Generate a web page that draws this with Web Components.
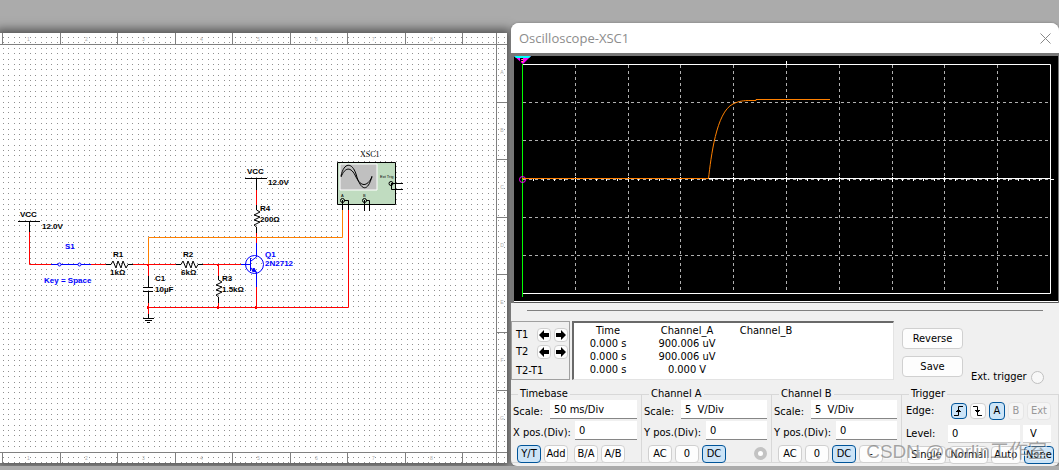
<!DOCTYPE html>
<html lang="en">
<head>
<meta charset="utf-8">
<title>Oscilloscope-XSC1</title>
<style>
    body{
    margin:0;
    background-color:#ababab;
    color:#000;
    font-family:"DejaVu Sans Condensed","DejaVu Sans",sans-serif;
    font-size:11px;
    line-height:14px;
    overflow:hidden;
    }
    main{
    display:grid;
    grid-template-columns:minmax(0,511fr) minmax(0,548fr);
    align-items:start;
    padding-top:23px;
    }
    circuit-sheet{
    margin:10px 4px 0 0;
    }
</style>
</head>
<body>
<main>
    <circuit-sheet></circuit-sheet>
    <scope-window heading="Oscilloscope-XSC1">
        <scope-screen></scope-screen>
        <cursor-panel></cursor-panel>
        <scope-controls></scope-controls>
    </scope-window>
</main>
<water-mark>CSDN @corlin工作室</water-mark>

<script>
    class Base extends HTMLElement{
        constructor(){
            super();
            this.attachShadow({mode:'open'});
        }
        connectedCallback(){
            const template=document.createElement('template');
            template.innerHTML=this.view();
            this.shadowRoot.replaceChildren(template.content.cloneNode(true));
        }
    }

    // ---------- schematic ----------
    class CircuitSheet extends Base{
        dots(){
            let d='';
            for(let j=0;j<80;j++){
                for(let i=0;i<94;i++){
                    d+=`M${Math.round(3+i*5.385)} ${Math.round(4+j*5.385)}h1v1h-1z`;
                }
            }
            return d;
        }
        rulers(){
            let out='<path d="M0 11.5H507M0 419.5H507M496.5 0V430" />';
            for(let i=0;i<9;i++){
                const x=Math.round(2+i*57.5)+0.5;
                out+=`<path d="M${x} 0V11M${x} 420V430" />`;
                if(i<8){
                    out+=`<text x="${x+26}" y="8">${i+1}</text><text x="${x+26}" y="427">${i+1}</text>`;
                }
            }
            for(let i=0;i<7;i++){
                const y=Math.round(11+i*57.6)+0.5;
                out+=`<path d="M497 ${y}H507" /><text x="502" y="${y+29}">${'ABCDEFG'[i]}</text>`;
            }
            return out;
        }
        view(){
            return `
    <style>
    :host{
    display:block;
    background-color:#fff;
    box-shadow:0 0 9px 4px #555;
    }
    svg{
    display:block;
    width:100%;
    height:auto;
    font-family:"Liberation Sans",Arial,sans-serif;
    font-size:8px;
    }
    .rulers path{stroke:#808080;fill:none;}
    .rulers text{fill:#aaa;font-size:5px;text-anchor:middle;}
    .wire{stroke:#f00;fill:none;}
    .probe{stroke:#ff8000;fill:none;}
    .part{stroke:#000;fill:none;}
    .blue{stroke:#00f;fill:none;}
    .name{font-weight:bold;}
    .key{font-weight:bold;fill:#00f;}
    .tiny{font-size:4px;}
    </style>
    <svg viewBox="0 0 507 430" role="img" aria-label="Circuit">
        <path d="${this.dots()}" fill="#909090" shape-rendering="crispEdges" />
        <g class="rulers">${this.rulers()}</g>

        <g transform="translate(0 -33)">
        <g class="wire">
            <path d="M29.5 231V264.5H52M90 264.5H106M133 264.5H177M202 264.5H242M148.5 264V277M148.5 302V315M148 307.5H348.5V208" />
            <path d="M218.5 264V277M218.5 302V307M256.5 189V206M256.5 232V244M256.5 286V307" />
        </g>
        <path class="probe" d="M148.5 264V237.5H342.5V208" />
        <path d="M147 264h2v2h-2zM147 306h2v3h-2zM217 264h2v2h-2zM217 306h2v3h-2zM255 306h2v3h-2z" fill="#f00" />

        <g class="part">
            <path d="M18 221.5H40M29.5 221V232M245 178.5H267M256.5 178V190" />
            <path d="M106 264.5H111L113 261L116 268L118 261L121 268L123 261L126 268L128 264.5H133" />
            <path d="M176 264.5H181L183 261L186 268L188 261L191 268L193 261L196 268L198 264.5H203" />
            <path d="M218.5 276V280L222 282L216 285L222 287L216 290L222 292L216 295L218.5 297V303" />
            <path d="M256.5 205V210L260 212L254 215L260 217L254 220L260 222L254 225L256.5 227V233" />
            <path d="M148.5 276V287M143 287.5H153M143 291.5H153M148.5 292V303" />
            <path d="M148.5 314V318M143 318.5H154M145 320.5H152M147 322.5H150" />
        </g>

        <g class="blue">
            <path d="M51 264.5H58M61 264.5H78M81 264.5H91" />
            <circle cx="59.5" cy="264.5" r="1.5" /><circle cx="79.5" cy="264.5" r="1.5" />
            <circle cx="254.5" cy="264.5" r="9" />
            <path d="M241 264.5H250M250.5 258V271M251 261L256.5 257V243M251 268L256.5 272V287" />
            <path d="M252 271L256 272L254 268z" fill="#00f" />
        </g>

        <g>
            <path d="M337.5 162.5H395.5V204.5H337.5z" fill="#c0dcc0" stroke="#000" />
            <path d="M340 164H377V190H340z" fill="#c0c0c0" stroke="#fff" />
            <path class="part" d="M341 176C344 162 352 162 356 174C361 192 368 192 372 176" />
            <path class="part" d="M341 177C345 167 351 166 356 177C361 187 367 187 372 177" />
            <g class="part">
                <circle cx="342.5" cy="200.5" r="2" /><circle cx="364.5" cy="200.5" r="2" /><circle cx="391" cy="183.5" r="2" />
                <path d="M342.5 200V210M344 200.5H348.5V210M364.5 200V211M366 200.5H369.5V211M391 183.5H403M391.5 184V189.5H403" />
            </g>
        </g>

        <g>
            <text class="name" x="20" y="217">VCC</text><text class="name" x="42" y="229">12.0V</text>
            <text class="name" x="247" y="174">VCC</text><text class="name" x="268" y="185">12.0V</text>
            <text class="name" x="113" y="257">R1</text><text class="name" x="110" y="275">1kΩ</text>
            <text class="name" x="183" y="257">R2</text><text class="name" x="181" y="275">6kΩ</text>
            <text class="name" x="222" y="281">R3</text><text class="name" x="222" y="292">1.5kΩ</text>
            <text class="name" x="260" y="211">R4</text><text class="name" x="260" y="222">200Ω</text>
            <text class="name" x="155" y="281">C1</text><text class="name" x="155" y="292">10µF</text>
            <text class="key" x="65" y="249">S1</text><text class="key" x="44" y="283">Key = Space</text>
            <text class="key" x="265" y="257">Q1</text><text class="key" x="265" y="266">2N2712</text>
            <text x="360" y="157" font-family="Liberation Serif,serif">XSC1</text>
            <text class="tiny" x="341" y="197">A</text><text class="tiny" x="363" y="197">B</text>
            <text class="tiny" x="380" y="178">Ext Trig</text>
        </g>
        </g>
    </svg>`;
        }
    }
    customElements.define('circuit-sheet',CircuitSheet);

    // ---------- window frame ----------
    class ScopeWindow extends Base{
        view(){
            return `
    <style>
    :host{
    display:block;
    background-color:#f0f0f0;
    border-radius:8px 8px 6px 6px;
    box-shadow:0 1px 3px 1px #777;
    overflow:hidden;
    position:relative;
    }
    header{
    display:flex;
    justify-content:space-between;
    align-items:center;
    height:30px;
    padding:0 8px;
    background-color:#fff;
    color:#8c8c8c;
    font-family:"Open Sans","Noto Sans",sans-serif;
    }
    h1{
    margin:0;
    font-size:13px;
    font-weight:normal;
    }
    button{
    display:flex;
    border:0;
    padding:0;
    background:none;
    }
    </style>
    <header>
        <h1>${this.getAttribute('heading')}</h1>
        <button aria-label="Close"><svg width="11" height="11"><path d="M0.5 0.5L10.5 10.5M10.5 0.5L0.5 10.5" stroke="#888" fill="none" /></svg></button>
    </header>
    <slot></slot>`;
        }
    }
    customElements.define('scope-window',ScopeWindow);

    // ---------- trace display ----------
    class ScopeScreen extends Base{
        grid(){
            let d='';
            for(let i=1;i<10;i++){
                d+=`M${Math.round(8+i*52.8)+0.5} 9V238`;
            }
            for(const y of [46,84,123,161,199]){
                d+=`M9 ${y+0.5}H537`;
            }
            return d;
        }
        ticks(){
            let d='';
            for(let i=1;i<50;i++){
                const x=Math.round(8+i*10.56)+0.5;
                d+=i%5==0?`M${x} 121V126`:`M${x} 123V125`;
            }
            return d;
        }
        view(){
            return `
    <style>
    :host{
    display:block;
    border:solid #777;
    border-width:3px 1px 0 3px;
    }
    svg{
    display:block;
    width:100%;
    height:auto;
    background-color:#000;
    }
    hr{
    margin:0;
    border:0;
    height:1px;
    background-color:#555;
    border-top:1px solid #fff;
    }
    path{fill:none;}
    </style>
    <svg viewBox="0 0 544 245" role="img" aria-label="Channel A trace">
        <path d="${this.grid()}" stroke="#b0b0b0" stroke-dasharray="3 3" />
        <path d="M8 8.5H536.5V237.5H8M272.5 5V9M8 122.5H537M536 123.5H540" stroke="#fff" />
        <path d="${this.ticks()}" stroke="#fff" />
        <path d="M8.5 8V241" stroke="#0f0" />
        <circle cx="8.5" cy="123.5" r="3" stroke="#f0f" fill="none" />
        <path d="M8 122.5H194.5C197 102 202 56 219 48C225 45 229 44.5 237 44.5H242V43.5H316" stroke="#ff8000" />
        <path d="M0 0H17L9 8z" style="fill:#f0f" />
        <path d="M0 0H17L15 2H2z" style="fill:#0ff" />
        <path d="M6.5 2V6M7 2.5H9M7 4.5H9" stroke="#000" />
        <path d="M8.5 3V7" stroke="#ff0" stroke-dasharray="1 1" />
    </svg>
    <hr>`;
        }
    }
    customElements.define('scope-screen',ScopeScreen);

    // shared look of the push buttons
    const buttonStyle=`
    button{
    box-sizing:border-box;
    display:flex;
    align-items:center;
    justify-content:center;
    height:18px;
    padding:0;
    border:1px solid #d0d0d0;
    border-radius:4px;
    background-color:#fdfdfd;
    color:#000;
    font:inherit;
    }
    button.on{
    background-color:#cce4f7;
    border-color:#005499;
    }
    button:disabled{
    background-color:#f5f5f5;
    border-color:#e6e6e6;
    color:#989898;
    }
    `;

    // ---------- cursors and readout ----------
    class CursorPanel extends Base{
        arrows(name){
            return `<span>${name}</span>
            <button aria-label="${name} left"><svg width="10" height="10"><path d="M0 5L5 0V3H10V7H5V10z" /></svg></button>
            <button aria-label="${name} right"><svg width="10" height="10"><path d="M10 5L5 0V3H0V7H5V10z" /></svg></button>`;
        }
        view(){
            return `
    <style>
    :host{
    display:block;
    }
    hr{
    margin:7px 16px 10px;
    border:0;
    border-top:1px solid #808080;
    }
    .row{
    display:flex;
    gap:2px;
    }
    ${buttonStyle}
    .cursors{
    box-sizing:border-box;
    display:grid;
    grid-template-columns:18px 14px 14px;
    grid-template-rows:14px 14px 16px;
    gap:3px;
    align-items:center;
    width:59px;
    height:59px;
    padding:6px 0 0 4px;
    border:1px solid #a0a0a0;
    }
    .cursors button{
    height:14px;
    }
    .cursors p{
    grid-column:span 3;
    align-self:end;
    margin:0;
    }
    .readout{
    box-sizing:border-box;
    flex:1;
    height:59px;
    padding-top:1px;
    background-color:#fff;
    border:1px solid #e3e3e3;
    border-top:2px solid #696969;
    border-left:2px solid #696969;
    }
    table{
    table-layout:fixed;
    width:226px;
    border-collapse:collapse;
    line-height:13px;
    }
    th,td{
    padding:0;
    font-weight:normal;
    text-align:center;
    white-space:nowrap;
    }
    col.mid{
    width:90px;
    }
    .actions{
    display:flex;
    gap:8px;
    align-items:flex-end;
    width:157px;
    padding-left:6px;
    box-sizing:content-box;
    }
    .stack{
    display:grid;
    gap:7px;
    padding-bottom:3px;
    }
    .stack button{
    width:61px;
    height:21px;
    }
    label{
    display:flex;
    gap:4px;
    align-items:center;
    margin-bottom:-4px;
    white-space:nowrap;
    }
    input{
    appearance:none;
    box-sizing:border-box;
    width:13px;
    height:13px;
    margin:0;
    border:1px solid #c0c0c0;
    border-radius:50%;
    background-color:#f8f8f8;
    }
    </style>
    <hr>
    <div class="row">
        <div class="cursors">
            ${this.arrows('T1')}
            ${this.arrows('T2')}
            <p>T2-T1</p>
        </div>
        <div class="readout">
            <table>
                <colgroup><col><col class="mid"><col></colgroup>
                <tr><th>Time</th><th>Channel_A</th><th>Channel_B</th></tr>
                <tr><td>0.000 s</td><td>900.006 uV</td><td></td></tr>
                <tr><td>0.000 s</td><td>900.006 uV</td><td></td></tr>
                <tr><td>0.000 s</td><td>0.000 V</td><td></td></tr>
            </table>
        </div>
        <div class="actions">
            <div class="stack">
                <button>Reverse</button>
                <button>Save</button>
            </div>
            <label>Ext. trigger <input type="radio"></label>
        </div>
    </div>`;
        }
    }
    customElements.define('cursor-panel',CursorPanel);

    // ---------- one labelled text box ----------
    class ScopeField extends Base{
        view(){
            return `
    <style>
    :host{
    display:flex;
    height:20px;
    }
    label{
    flex:none;
    width:var(--label,37px);
    line-height:24px;
    white-space:nowrap;
    }
    input{
    box-sizing:border-box;
    flex:1;
    min-width:0;
    height:19px;
    padding:0 4px;
    border:0;
    border-bottom:1px solid #868686;
    background-color:#fff;
    font:inherit;
    }
    </style>
    <label for="box">${this.getAttribute('label')}</label>
    <input id="box" value="${this.getAttribute('value')}">`;
        }
    }
    customElements.define('scope-field',ScopeField);

    // ---------- titled group ----------
    class ScopeGroup extends Base{
        view(){
            return `
    <style>
    :host{
    display:block;
    min-width:0;
    }
    fieldset{
    box-sizing:border-box;
    min-width:0;
    height:75px;
    margin:0;
    padding:0 4px 0 2px;
    border:1px solid #d8d8d8;
    border-left:0;
    }
    legend{
    margin-left:5px;
    padding:0 2px;
    line-height:12px;
    }
    .body{
    display:grid;
    grid-template-columns:minmax(0,1fr);
    gap:1px;
    }
    </style>
    <fieldset>
        <legend>${this.getAttribute('heading')}</legend>
        <div class="body"><slot></slot></div>
    </fieldset>`;
        }
    }
    customElements.define('scope-group',ScopeGroup);

    class ScopeControls extends Base{
        view(){
            return `
    <style>
    :host{
    display:grid;
    grid-template-columns:minmax(0,131fr) minmax(0,130fr) minmax(0,130fr) minmax(0,157fr);
    margin-top:8px;
    padding-bottom:3px;
    }
    ${buttonStyle}
    scope-field.pos{
    --label:62px;
    }
    .buttons{
    display:flex;
    gap:3px;
    padding:3px 0 0 4px;
    }
    .buttons button,.edge button{
    width:24px;
    }
    .buttons .first{
    margin-right:3px;
    }
    .lamp{
    width:5px;
    height:5px;
    margin:2px 0 0 auto;
    border:4px solid #c3c3c3;
    border-radius:50%;
    background-color:#fff;
    }
    .edge,.level{
    display:flex;
    align-items:center;
    gap:3px;
    height:22px;
    padding-left:2px;
    }
    .edge span{
    width:42px;
    }
    .edge .slope{
    width:16px;
    height:16px;
    }
    .edge .small{
    width:16px;
    }
    .level label{
    width:39px;
    }
    .level input{
    box-sizing:border-box;
    width:72px;
    height:18px;
    padding:0 4px;
    border:0;
    border-bottom:1px solid #c8c8c8;
    background-color:#fff;
    font:inherit;
    }
    .level .unit{
    width:28px;
    padding:0 7px;
    }
    .modes{
    display:flex;
    gap:3px;
    padding-left:3px;
    }
    .wide{
    width:40px;
    }
    .mode{
    width:31px;
    }
    </style>
    <scope-group heading="Timebase">
        <scope-field label="Scale:" value="50 ms/Div"></scope-field>
        <scope-field class="pos" label="X pos.(Div):" value="0"></scope-field>
        <div class="buttons"><button class="on">Y/T</button><button class="first">Add</button><button>B/A</button><button>A/B</button></div>
    </scope-group>
    <scope-group heading="Channel A">
        <scope-field label="Scale:" value="5  V/Div"></scope-field>
        <scope-field class="pos" label="Y pos.(Div):" value="0"></scope-field>
        <div class="buttons"><button>AC</button><button>0</button><button class="on">DC</button><span class="lamp"></span></div>
    </scope-group>
    <scope-group heading="Channel B">
        <scope-field label="Scale:" value="5  V/Div"></scope-field>
        <scope-field class="pos" label="Y pos.(Div):" value="0"></scope-field>
        <div class="buttons"><button>AC</button><button>0</button><button class="on">DC</button><button>-</button></div>
    </scope-group>
    <scope-group heading="Trigger">
        <div class="edge">
            <span>Edge:</span>
            <button class="slope on" aria-label="Rising"><svg width="10" height="10"><path d="M0 9.5H4.5V0.5H9M2 5.5H7M3 4.5H6" fill="none" stroke="#000" /></svg></button>
            <button class="slope" aria-label="Falling"><svg width="10" height="10"><path d="M0 0.5H4.5V9.5H9M2 4.5H7M3 5.5H6" fill="none" stroke="#000" /></svg></button>
            <button class="small on">A</button>
            <button class="small" disabled>B</button>
            <button disabled>Ext</button>
        </div>
        <div class="level">
            <label for="level">Level:</label>
            <input id="level" value="0">
            <input class="unit" aria-label="Unit" value="V">
        </div>
        <div class="modes"><button class="wide">Single</button><button class="wide">Normal</button><button class="mode">Auto</button><button class="mode on">None</button></div>
    </scope-group>`;
        }
    }
    customElements.define('scope-controls',ScopeControls);

    class WaterMark extends Base{
        view(){
            return `
    <style>
    :host{
    position:absolute;
    right:12px;
    top:440px;
    color:rgba(110,110,110,.6);
    font-family:"Liberation Sans","Noto Sans CJK SC",sans-serif;
    font-size:19px;
    line-height:24px;
    text-shadow:1px 1px 0 rgba(255,255,255,.6);
    white-space:nowrap;
    pointer-events:none;
    }
    </style>
    <slot></slot>`;
        }
    }
    customElements.define('water-mark',WaterMark);
</script>
</body>
</html>
